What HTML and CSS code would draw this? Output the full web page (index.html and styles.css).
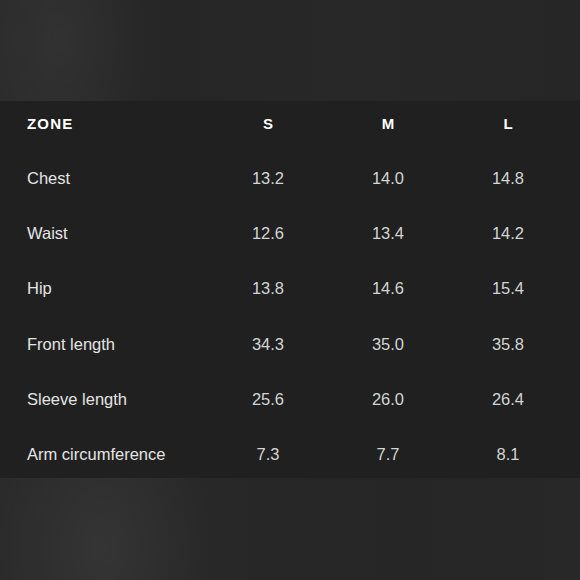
FILE: index.html
```html
<!DOCTYPE html>
<html>
<head>
<meta charset="utf-8">
<link rel="stylesheet" href="styles.css">
</head>
<body>
<div class="page">
  <div class="backdrop top"></div>
  <div class="band">
    <div class="row head">
      <div class="zone">ZONE</div><div class="cell">S</div><div class="cell">M</div><div class="cell">L</div>
    </div>
    <div class="row"><div class="zone">Chest</div><div class="cell">13.2</div><div class="cell">14.0</div><div class="cell">14.8</div></div>
    <div class="row"><div class="zone">Waist</div><div class="cell">12.6</div><div class="cell">13.4</div><div class="cell">14.2</div></div>
    <div class="row"><div class="zone">Hip</div><div class="cell">13.8</div><div class="cell">14.6</div><div class="cell">15.4</div></div>
    <div class="row"><div class="zone">Front length</div><div class="cell">34.3</div><div class="cell">35.0</div><div class="cell">35.8</div></div>
    <div class="row"><div class="zone">Sleeve length</div><div class="cell">25.6</div><div class="cell">26.0</div><div class="cell">26.4</div></div>
    <div class="row"><div class="zone">Arm circumference</div><div class="cell">7.3</div><div class="cell">7.7</div><div class="cell">8.1</div></div>
  </div>
  <div class="backdrop bottom"></div>
</div>
</body>
</html>
```

FILE: styles.css
```css
html, body {
  margin: 0;
  padding: 0;
  background: #282828;
}
.page {
  width: 580px;
  height: 580px;
  display: flex;
  flex-direction: column;
  overflow: hidden;
  font-family: "Liberation Sans", Arial, sans-serif;
}
.backdrop {
  flex: none;
}
.backdrop.top {
  height: 101px;
  background:
    radial-gradient(ellipse 90px 160px at 60px 40px, rgba(255,255,255,0.045), rgba(255,255,255,0) 100%),
    linear-gradient(90deg, #2a2a2a 0%, #262626 30%, #282828 60%, #262626 100%);
}
.backdrop.bottom {
  height: 102px;
  background:
    radial-gradient(ellipse 110px 160px at 105px 70px, rgba(255,255,255,0.05), rgba(255,255,255,0) 100%),
    linear-gradient(90deg, #2b2b2b 0%, #282828 35%, #262626 70%, #282828 100%);
}
.band {
  height: 377px;
  flex: none;
  background: #202020;
  overflow: hidden;
}
.row {
  display: grid;
  grid-template-columns: 181px 120px 120px 120px;
  padding-left: 27px;
  padding-top: 1px;
  box-sizing: border-box;
  height: 55.33px;
  align-items: center;
  font-size: 16.5px;
}
.row.head {
  height: 49px;
  padding-top: 0;
  padding-bottom: 4px;
  font-weight: bold;
  font-size: 15px;
}
.row.head .zone {
  letter-spacing: 1.2px;
}
.zone {
  color: #e4e4e4;
}
.row.head .zone, .row.head .cell {
  color: #ffffff;
}
.cell {
  text-align: center;
  color: #d4d4d4;
}
```
